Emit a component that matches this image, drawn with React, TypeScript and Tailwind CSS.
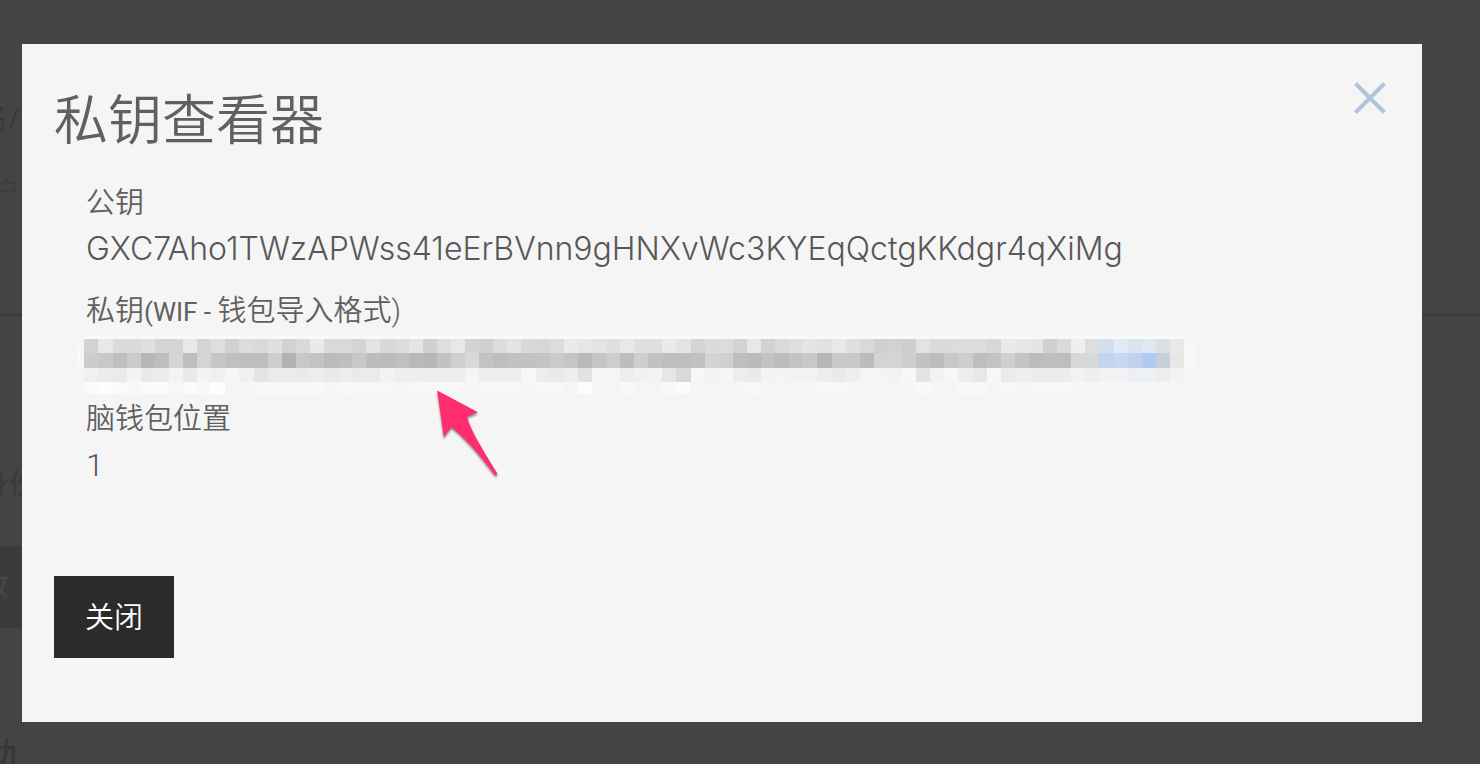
import React from "react";

const CELL = 14.1;

const TOP =
  "d2 e8 db db e0 d5 d5 e8 d4 de d0 dc d9 e0 d2 d9 ea d9 d9 d4 e4 d8 dc e5 d0 de e8 d3 d0 dd e4 d8 d7 dc ea e6 e4 e0 e8 df df ea e4 d4 db dc d3 e8 d2 da df e5 e1 e8 df d9 cf d2 ce e3 db db dd dc d7 ea e6 e5 d1 da efefed dcdee1 d3deef e2ebf4 dbe3ef dee8f3 dddfe3 e9 f7";
const MIDDLE =
  "cc c8 bf cb b8 be d6 be d4 c6 c0 be be cd b2 c8 c3 bb be c8 bd bc c0 b9 b7 c2 d0 d9 c3 be c1 c2 c3 ca c5 ba c5 cd bd ce c2 be be c2 d4 d0 be ba c3 bc c3 c8 b7 c9 c9 bc d4 d5 ce c2 bc c8 cd be c3 d0 c4 bc be be d8 d6d8da c3d5ee c5d7f1 bed1ed b0cbef c5d0da e9e7e4 f8";
const LOWER =
  "f0 ec ea f4 ea ec f4 ea f4 f0 f5 f0 e4 eb eb ea ed ea ed ea eb f3 ee ee ed ed ed f5 ee ee ee f7 ed ea ee e2 f5 f5 ed f1 f3 e6 d9 f7 f3 f6 ed ea f3 f4 f2 f2 ed ea ee f5 f4 f3 f7 e3 f2 f7 ed e8 f7 eb ee ec ec ec f2 ee f2 f0f2f7 ecf0f6 edf0f5 ebedef f3 f5";
const FOOT =
  "fa fd fa f8 fb fb f7 fb f8 fe f5 f6 f8 f8 f8 f8 f8 f6 f8 f7 f7 f7 f5 f7 f7 f7 f7 f6 f7 f7 f7 f6 f7 f7 f5 fc f5 f5 f8 f5 f5 f8 fb f5 f5 f5 f6 f8 f6 f5 f6 f5 f7 f7 f6 f5 f5 f5 f5 f9 f6 f5 f8 f8 f5 f7 f5 f7 f7 f7 f5 f6 f6f6f4 f6f6f4 f6f5f2 f6f5f2 f6f6f2 f5 f5";

const ROWS = [
  { y: 4, h: 14, cells: TOP },
  { y: 18, h: 15, cells: MIDDLE },
  { y: 33, h: 14, cells: LOWER },
  { y: 47, h: 12, cells: FOOT },
];

function shade(code: string) {
  return code.length === 2 ? `#${code}${code}${code}` : `#${code}`;
}

function MaskedKey() {
  return (
    <svg
      width="1120"
      height="60"
      viewBox="0 0 1120 60"
      shapeRendering="crispEdges"
      role="img"
      aria-label="私钥"
      className="-ml-[10px] block shrink-0"
    >
      <rect x="1" y="11" width="3" height="19" fill="#fafafa" />
      <rect x="8" y="0" width="1100" height="4" fill="#f9f9f9" />
      {ROWS.map((row) =>
        row.cells.split(" ").map((code, i) => {
          const x = Math.round(8.3 + i * CELL);
          const next = i === 78 ? 1120 : Math.round(8.3 + (i + 1) * CELL);
          return (
            <rect key={`${row.y}-${i}`} x={x} y={row.y} width={next - x} height={row.h} fill={shade(code)} />
          );
        }),
      )}
    </svg>
  );
}

function Pointer() {
  return (
    <svg
      width="70"
      height="96"
      viewBox="0 0 70 96"
      aria-hidden="true"
      className="pointer-events-none absolute top-[50px] left-[346px] drop-shadow-[0_2px_1px_rgba(0,0,0,0.45)]"
    >
      <path
        d="M5.2 5.5 L46 27.2 L35.2 31.5 C37 42 49 62 64.8 87.6 Q66 90.5 63 90.2 C50 73 34 53 19.5 42.2 L11.8 52 Z"
        fill="#ff2d6e"
      />
    </svg>
  );
}

function Backdrop() {
  return (
    <div
      aria-hidden="true"
      className="flex min-h-screen flex-col overflow-hidden bg-[#444444] text-[28px] leading-[40px] text-[#393939]"
    >
      <div className="mt-[99px] -ml-[20px]">名/</div>
      <div className="mt-[34px] flex justify-between">
        <span className="-ml-[8px] text-[#3d3d3d]">户</span>
        <span className="-mr-[24px] text-[#3d3d3d]">不</span>
      </div>
      <div className="mt-[101px] border-t-2 border-[#3a3a3a]" />
      <div className="mt-[149px] -ml-[19px]">身份</div>
      <div className="mt-[41px] flex h-[82px] w-[60px] items-center bg-[#3b3b3b] text-[#484848]">
        <span className="-ml-[19px]">改</span>
      </div>
      <div className="mt-[107px] -ml-[15px] text-[32px] font-medium text-[#363636]">助</div>
    </div>
  );
}

export default function App() {
  return (
    <div className="relative h-screen overflow-hidden font-['Roboto','Noto_Sans_CJK_SC',sans-serif]">
      <Backdrop />
      <div className="absolute inset-0 pt-[44px] pr-[58px] pl-[22px]">
        <section
          role="dialog"
          aria-modal="true"
          aria-labelledby="dialog-title"
          className="bg-[#f5f5f5] px-8 pt-8 pb-16 text-[#606060]"
        >
          <header className="flex items-start justify-between">
            <h1 id="dialog-title" className="pt-[6px] text-[54px] leading-[80px] font-[350]">
              私钥查看器
            </h1>
            <button type="button" aria-label="关闭" className="-mr-[2px] p-1 text-[#b0c4da]">
              <svg width="36" height="36" viewBox="0 0 36 36" stroke="currentColor" strokeWidth="4" aria-hidden="true">
                <path d="M3.5 3.5 L32.5 32.5 M32.5 3.5 L3.5 32.5" />
              </svg>
            </button>
          </header>
          <dl className="px-8 pt-[17px] text-[29px] leading-[48px] font-[350]">
            <dt>公钥</dt>
            <dd className="font-['Inter',sans-serif] text-[32px] leading-[44px] text-[#585858]">
              GXC7Aho1TWzAPWss41eErBVnn9gHNXvWc3KYEqQctgKKdgr4qXiMg
            </dd>
            <dt className="pt-4">
              私钥<span className="text-[26px] leading-none font-normal">(WIF - </span>钱包导入格式)
            </dt>
            <dd className="relative">
              <MaskedKey />
              <Pointer />
            </dd>
            <dt>脑钱包位置</dt>
            <dd className="text-[32px] leading-[44px] text-[#585858]">1</dd>
          </dl>
          <button
            type="button"
            className="mt-[89px] block h-[82px] bg-[#2b2b2b] px-[31px] pt-1 text-[29px] font-[350] text-white"
          >
            关闭
          </button>
        </section>
      </div>
    </div>
  );
}
